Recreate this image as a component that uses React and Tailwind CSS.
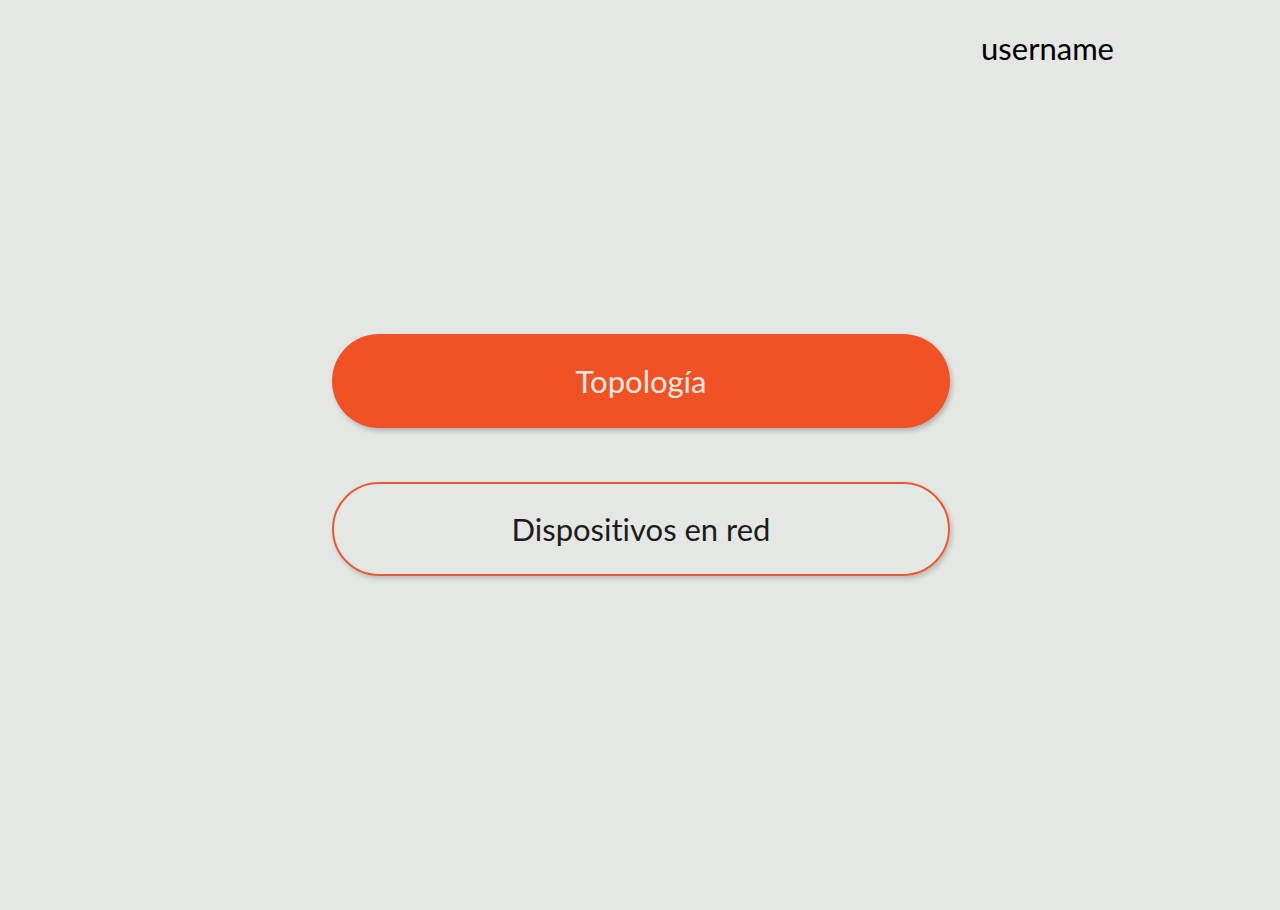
import React from 'react';

const App = () => {
    return (
        <div className="flex flex-col h-[910px] w-full bg-[#e5e7e4] font-['Lato','Liberation_Sans',sans-serif] [font-variant-ligatures:none]">
            {/* Header */}
            <header className="flex items-center justify-end h-[96px] pr-[166px]">
                <span className="text-[31px] leading-none text-black">username</span>
            </header>

            {/* Menu */}
            <main className="flex flex-1 flex-col items-center justify-center gap-[54px] pb-[96px] pl-[2px]">
                <button className="w-[618px] h-[94px] rounded-full bg-[#f15225] text-[#fbe9e1] text-[31px] shadow-[2px_3px_5px_rgba(0,0,0,0.22)]">
                    Topología
                </button>
                <button className="w-[618px] h-[94px] rounded-full border-2 border-[#ea5a32] text-[#1c1c1c] text-[31px] shadow-[2px_3px_5px_rgba(0,0,0,0.18)]">
                    Dispositivos en red
                </button>
            </main>
        </div>
    );
};

export default App;
